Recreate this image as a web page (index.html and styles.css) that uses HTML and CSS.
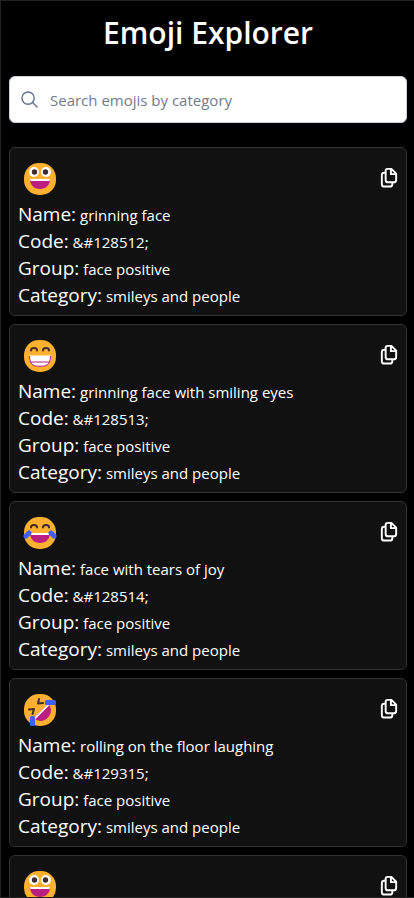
FILE: index.html
```html
<!DOCTYPE html>
<html lang="en">
<head>
<meta charset="utf-8">
<meta name="viewport" content="width=device-width, initial-scale=1">
<title>Emoji Explorer</title>
<link rel="stylesheet" href="styles.css">
</head>
<body>
<svg class="symbols" aria-hidden="true">
  <symbol id="copy" viewBox="0 0 18 22">
    <path d="M7.500 2H11.500L16.500 7V13.500Q16.500 16 14 16H8Q5.500 16 5.500 13.500V4Q5.500 2 7.500 2Z M11 2.500V7.500H16 M5.500 6H4Q1.500 6 1.500 8.500V18Q1.500 20.500 4 20.500H10Q12.500 20.500 12.500 18V16" fill="none" stroke="#fff" stroke-width="2" stroke-linejoin="round"/>
  </symbol>
  <symbol id="grin" viewBox="0 0 32 32">
    <rect width="32" height="32" rx="15" fill="#ffb02e"/>
    <circle cx="10" cy="9" r="5" fill="#fff"/><circle cx="22" cy="9" r="5" fill="#fff"/>
    <circle cx="10.500" cy="9" r="2.700" fill="#402a32"/><circle cx="21.500" cy="9" r="2.700" fill="#402a32"/>
    <path d="M6 16H26C26 22 22 26 16 26S6 22 6 16Z" fill="#bb1d80"/><path d="M6 16H26L25.500 18H6.500Z" fill="#fff"/>
  </symbol>
  <symbol id="smile" viewBox="0 0 32 32">
    <rect width="32" height="32" rx="15" fill="#ffb02e"/>
    <path d="M7 10.500C7 7.200 13 7.200 13 10.500M19 10.500C19 7.200 25 7.200 25 10.500" fill="none" stroke="#402a32" stroke-width="2" stroke-linecap="round"/>
    <path d="M5 15.500H27C27 25 22 26.500 16 26.500S5 25 5 15.500Z" fill="#fff"/>
    <path d="M5.500 16C5.500 25 10 26.300 16 26.300S26.500 25 26.500 16M6 22H26" fill="none" stroke="#bb1d80"/>
  </symbol>
  <symbol id="joy" viewBox="0 0 34 32">
    <rect x="1" width="32" height="32" rx="15" fill="#ffb02e"/>
    <path d="M8 10.500C8 7.200 14 7.200 14 10.500M20 10.500C20 7.200 26 7.200 26 10.500" fill="none" stroke="#402a32" stroke-width="2" stroke-linecap="round"/>
    <path d="M7 16H27C27 22 23 26 17 26S7 22 7 16Z" fill="#bb1d80"/><path d="M7 16H27L26.500 18H7.500Z" fill="#fff"/>
    <path d="M6 16L3 19M28 16L31 19" stroke="#3f5fff" stroke-width="5" stroke-linecap="round"/>
  </symbol>
  <symbol id="rofl" viewBox="0 0 32 32">
    <rect width="32" height="32" rx="15" fill="#ffb02e"/>
    <path d="M5 15.500L10 15L8.500 20M15 5L14 9.500L19 9" fill="none" stroke="#402a32" stroke-width="2" stroke-linecap="round" stroke-linejoin="round"/>
    <path d="M10 24L24 10C28 14 28 19 24 23.500C20 28 14 28 10 24Z" fill="#bb1d80"/>
    <path d="M10 24L24 10L25 11.500L11.500 25Z" fill="#fff"/>
    <rect x="21" y="6" width="11" height="5" rx="1.500" fill="#3f5fff"/>
    <rect x="6" y="22" width="5" height="10" rx="1.500" fill="#3f5fff"/>
  </symbol>
</svg>
<div class="app">
  <h1 class="title">Emoji Explorer</h1>
  <label class="search">
    <svg class="search-icon" viewBox="0 0 18 18" aria-hidden="true"><circle cx="7.500" cy="7.500" r="6.500"/><path d="M12.300 12.300L17 17"/></svg>
    <input class="search-input" type="text" placeholder="Search emojis by category" aria-label="Search emojis by category">
  </label>
  <main class="list">
    <article class="card">
      <header class="card-head"><svg class="emoji"><use href="#grin"/></svg><button class="copy" type="button" aria-label="Copy"><svg class="copy-icon"><use href="#copy"/></svg></button></header>
      <p class="row"><span class="key">Name:</span> grinning face</p>
      <p class="row"><span class="key">Code:</span> &amp;#128512;</p>
      <p class="row"><span class="key">Group:</span> face positive</p>
      <p class="row"><span class="key">Category:</span> smileys and people</p>
    </article>
    <article class="card">
      <header class="card-head"><svg class="emoji"><use href="#smile"/></svg><button class="copy" type="button" aria-label="Copy"><svg class="copy-icon"><use href="#copy"/></svg></button></header>
      <p class="row"><span class="key">Name:</span> grinning face with smiling eyes</p>
      <p class="row"><span class="key">Code:</span> &amp;#128513;</p>
      <p class="row"><span class="key">Group:</span> face positive</p>
      <p class="row"><span class="key">Category:</span> smileys and people</p>
    </article>
    <article class="card">
      <header class="card-head"><svg class="emoji"><use href="#joy"/></svg><button class="copy" type="button" aria-label="Copy"><svg class="copy-icon"><use href="#copy"/></svg></button></header>
      <p class="row"><span class="key">Name:</span> face with tears of joy</p>
      <p class="row"><span class="key">Code:</span> &amp;#128514;</p>
      <p class="row"><span class="key">Group:</span> face positive</p>
      <p class="row"><span class="key">Category:</span> smileys and people</p>
    </article>
    <article class="card">
      <header class="card-head"><svg class="emoji"><use href="#rofl"/></svg><button class="copy" type="button" aria-label="Copy"><svg class="copy-icon"><use href="#copy"/></svg></button></header>
      <p class="row"><span class="key">Name:</span> rolling on the floor laughing</p>
      <p class="row"><span class="key">Code:</span> &amp;#129315;</p>
      <p class="row"><span class="key">Group:</span> face positive</p>
      <p class="row"><span class="key">Category:</span> smileys and people</p>
    </article>
    <article class="card">
      <header class="card-head"><svg class="emoji"><use href="#grin"/></svg><button class="copy" type="button" aria-label="Copy"><svg class="copy-icon"><use href="#copy"/></svg></button></header>
    </article>
  </main>
</div>
</body>
</html>
```
FILE: styles.css
```css
* { box-sizing: border-box; }
body {
  margin: 0;
  background: #000;
  color: #fff;
  font-family: "Segoe UI", "Open Sans", "Noto Sans", sans-serif;
  font-size: 15px;
}
.symbols { display: none; }
.app {
  height: 100vh;
  overflow: hidden;
  padding: 8px 7px 0 8px;
  border: 1px solid #222;
  border-right: 0;
}
.title {
  margin: 0 0 20px;
  font-size: 30px;
  font-weight: 600;
  line-height: 47px;
  text-align: center;
}
.search {
  display: flex;
  align-items: center;
  gap: 12px;
  height: 47px;
  padding: 0 11px;
  margin-bottom: 24px;
  background: #fff;
  border: 1px solid #cbd2e0;
  border-radius: 6px;
}
.search-icon {
  flex: none;
  width: 17px;
  height: 17px;
  fill: none;
  stroke: #64748b;
  stroke-width: 1.5;
  stroke-linecap: round;
}
.search-input {
  flex: 1;
  min-width: 0;
  padding: 0;
  border: 0;
  outline: 0;
  background: transparent;
  color: #111;
  font: inherit;
}
.search-input::placeholder { color: #6f7c8b; opacity: 1; }
.list { display: grid; gap: 8px; }
.card {
  min-height: 169px;
  padding: 8px 8px 6px;
  background: #111;
  border: 1px solid #333;
  border-radius: 6px;
}
.card-head {
  display: flex;
  align-items: center;
  justify-content: space-between;
  height: 45px;
  padding-left: 5px;
}
.emoji { width: 34px; height: 32px; }
.copy {
  display: flex;
  padding: 0 0 2px;
  border: 0;
  background: none;
}
.copy-icon { width: 18px; height: 21px; }
.row { margin: 0; height: 27px; line-height: 27px; white-space: nowrap; }
.key { font-size: 19px; }
```
